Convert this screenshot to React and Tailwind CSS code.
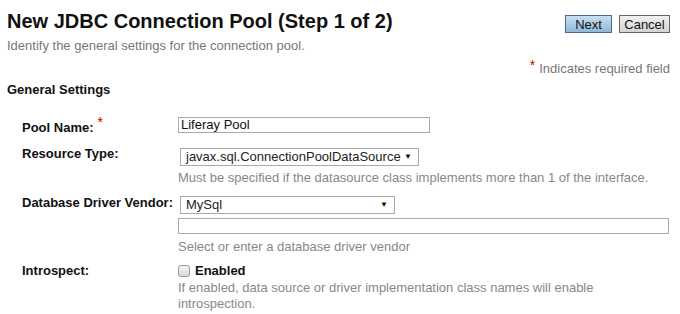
import React from 'react';

const font = { fontFamily: '"Liberation Sans", Arial, sans-serif' };

function Row({ label, required, children, labelClass = '' }) {
  return (
    <div className="flex">
      <div className={`w-[156px] shrink-0 font-bold text-[13px] text-[#111] ${labelClass}`}>
        {label}
        {required && <span className="text-[#c00] font-normal text-[14px] relative -top-[5px] ml-[4px]">*</span>}
      </div>
      <div className="flex-1 flex flex-col">{children}</div>
    </div>
  );
}

function FakeSelect({ value, width }) {
  return (
    <div
      className={`${width} h-[18px] border border-[#aaa] bg-white flex items-center justify-between pl-[5px] pr-[6px] text-[13px] text-[#222]`}
    >
      <span>{value}</span>
      <span className="text-[8px] text-[#111]">▼</span>
    </div>
  );
}

export default function App() {
  return (
    <div className="w-[680px] h-[314px] bg-white overflow-hidden pl-[7px] pr-[10px]" style={font}>
      <div className="flex items-start justify-between pt-[9px]">
        <h1 className="text-[20px] font-bold text-[#111] leading-[24px]">New JDBC Connection Pool (Step 1 of 2)</h1>
        <div className="flex gap-[7px] mt-[6px]">
          <button className="w-[47px] h-[18px] border border-[#4b6b87] bg-gradient-to-b from-[#c9e0f0] to-[#8fb8d8] text-[13px] text-[#111] leading-none">
            Next
          </button>
          <button className="w-[51px] h-[18px] border border-[#666] bg-gradient-to-b from-[#f0f0f0] to-[#d4d4d4] text-[13px] text-[#111] leading-none">
            Cancel
          </button>
        </div>
      </div>
      <p className="text-[13px] text-[#777] leading-[16px] mt-[5px]">Identify the general settings for the connection pool.</p>
      <p className="text-[13px] text-[#777] text-right leading-[16px] mt-[6px]">
        <span className="text-[#c00] text-[14px] relative -top-[3px] mr-[4px]">*</span>
        Indicates required field
      </p>
      <h2 className="text-[13px] font-bold text-[#111] leading-[16px] mt-[5px]">General Settings</h2>

      <div className="pl-[15px] mt-[19px] flex flex-col text-[13px] leading-[16px]">
        <Row label="Pool Name:" required labelClass="pt-[2px]">
          <div className="w-[252px] h-[16px] border border-[#aaa] bg-white text-[13px] text-[#111] leading-[14px] pl-[2px]">Liferay Pool</div>
        </Row>
        <div className="mt-[12px]">
          <Row label="Resource Type:" labelClass="-mt-[2px]">
            <div className="ml-[2px]">
              <FakeSelect value="javax.sql.ConnectionPoolDataSource" width="w-[239px]" />
            </div>
            <div className="text-[#888] mt-[4px]">Must be specified if the datasource class implements more than 1 of the interface.</div>
          </Row>
        </div>
        <div className="mt-[10px]">
          <Row label="Database Driver Vendor:" labelClass="-mt-[1px]">
            <div className="ml-[2px]">
              <FakeSelect value="MySql" width="w-[215px]" />
            </div>
            <div className="w-[491px] h-[16px] border border-[#aaa] bg-white mt-[4px]"></div>
            <div className="text-[#888] mt-[5px]">Select or enter a database driver vendor</div>
          </Row>
        </div>
        <div className="mt-[8px]">
          <Row label="Introspect:">
            <div className="flex items-center gap-[5px]">
              <div className="w-[12px] h-[12px] rounded-[3px] border border-[#999] bg-gradient-to-b from-[#f4f4f4] to-[#d8d8d8]"></div>
              <span className="font-bold text-[#111]">Enabled</span>
            </div>
            <div className="text-[#888] mt-[1px] w-[460px]">
              If enabled, data source or driver implementation class names will enable introspection.
            </div>
          </Row>
        </div>
      </div>
    </div>
  );
}
